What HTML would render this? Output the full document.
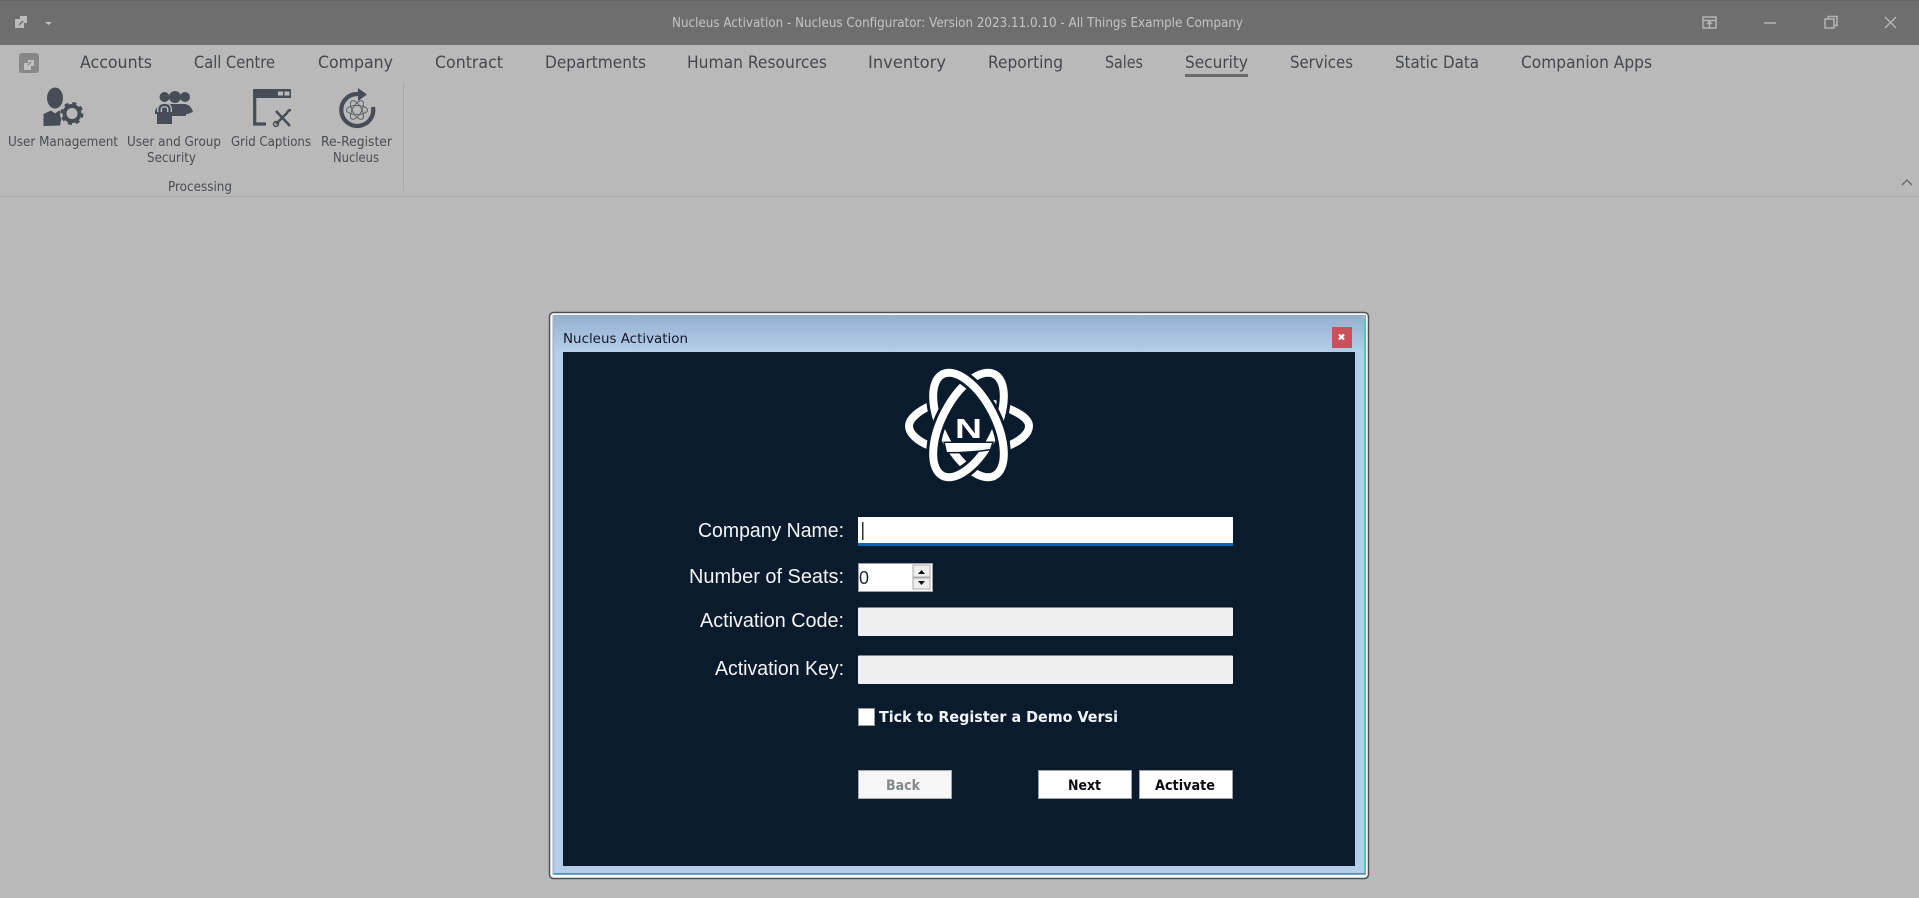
<!DOCTYPE html>
<html><head><meta charset="utf-8"><title>Nucleus Activation</title>
<style>
html,body{margin:0;padding:0;background:#b9b9b9;width:1919px;height:898px;overflow:hidden}
svg{display:block;filter:blur(.35px)}
.m{font:17px "DejaVu Sans","Liberation Sans",sans-serif;fill:#45494e}
.r{font:13px "DejaVu Sans","Liberation Sans",sans-serif;fill:#494d52}
.t{font:13px "DejaVu Sans","Liberation Sans",sans-serif;fill:#c4c4c4}
.l{font:20px "Liberation Sans",sans-serif;fill:#f4f4f4}
.b{font:bold 14px "DejaVu Sans","Liberation Sans",sans-serif;fill:#0a0c12}
</style></head><body>
<svg width="1919" height="898" viewBox="0 0 1919 898" xmlns="http://www.w3.org/2000/svg">
<defs>
<linearGradient id="g" x1="0" y1="0" x2="0" y2="1"><stop offset="0" stop-color="#96b1d0"/><stop offset="1" stop-color="#b4cde8"/></linearGradient>
<clipPath id="aover"><rect x="950" y="362" width="38" height="36"/><rect x="984" y="408" width="30" height="34"/></clipPath>
</defs>
<rect width="1919" height="898" fill="#b9b9b9"/>
<rect width="1919" height="45" fill="#6e6e6e"/>
<rect width="1919" height="1" fill="#666"/>
<rect y="196" width="1919" height="1" fill="#aaa"/>
<rect x="403" y="83" width="1" height="108" fill="#a8a8a8"/>
<path d="M1902 185l5-5 5 5" fill="none" stroke="#666" stroke-width="1.3"/>

<!-- title bar -->
<path d="M15 19h5v-3h7v7h-3v5h-9z" fill="#bcbcbc"/><path d="M19 25l4-4" stroke="#6e6e6e" stroke-width="1.5"/>
<path d="M45 22h7l-3.500 3z" fill="#c4c4c4"/>
<text class="t" x="672" y="27" textLength="571" lengthAdjust="spacingAndGlyphs">Nucleus Activation - Nucleus Configurator: Version 2023.11.0.10 - All Things Example Company</text>
<g fill="none" stroke="#b4b4b4" stroke-width="1.500">
<rect x="1703" y="17" width="13" height="11"/><path d="M1703 20.500h13M1709.500 28v-6M1707 24l2.500-2.500 2.500 2.500"/>
<path d="M1764 23h12"/>
<rect x="1825" y="19" width="9" height="9"/><path d="M1828 19v-2.500h9v9h-3"/>
<path d="M1885 17l11 11M1896 17l-11 11"/>
</g>

<!-- menu -->
<rect x="19" y="53" width="20" height="20" rx="3" fill="#878787"/>
<path d="M24 63h4v-3h6v6h-3v4h-7z" fill="#c0c0c0"/><path d="M28 65l3-3" stroke="#878787" stroke-width="1.500"/>
<g class="m">
<text x="80" y="68" textLength="72" lengthAdjust="spacingAndGlyphs">Accounts</text>
<text x="194" y="68" textLength="81" lengthAdjust="spacingAndGlyphs">Call Centre</text>
<text x="318" y="68" textLength="75" lengthAdjust="spacingAndGlyphs">Company</text>
<text x="435" y="68" textLength="68" lengthAdjust="spacingAndGlyphs">Contract</text>
<text x="545" y="68" textLength="101" lengthAdjust="spacingAndGlyphs">Departments</text>
<text x="687" y="68" textLength="140" lengthAdjust="spacingAndGlyphs">Human Resources</text>
<text x="868" y="68" textLength="78" lengthAdjust="spacingAndGlyphs">Inventory</text>
<text x="988" y="68" textLength="75" lengthAdjust="spacingAndGlyphs">Reporting</text>
<text x="1105" y="68" textLength="38" lengthAdjust="spacingAndGlyphs">Sales</text>
<text x="1185" y="68" textLength="63" lengthAdjust="spacingAndGlyphs">Security</text>
<text x="1290" y="68" textLength="63" lengthAdjust="spacingAndGlyphs">Services</text>
<text x="1395" y="68" textLength="84" lengthAdjust="spacingAndGlyphs">Static Data</text>
<text x="1521" y="68" textLength="131" lengthAdjust="spacingAndGlyphs">Companion Apps</text>
</g>
<rect x="1185" y="74" width="63" height="3" fill="#6b6b6b"/>

<!-- ribbon icons -->
<g fill="#464d57">
<ellipse cx="55" cy="98" rx="8" ry="10.500"/>
<path d="M43.500 126v-12l7.500-3.500 4 3 4-3 3 1v4l-2 10z"/>
</g>
<circle cx="72" cy="113.500" r="12" fill="#b9b9b9"/>
<circle cx="72" cy="113.500" r="7.500" fill="none" stroke="#464d57" stroke-width="4"/>
<circle cx="72" cy="113.500" r="10" fill="none" stroke="#464d57" stroke-width="3" stroke-dasharray="4 3.850"/>
<g fill="#464d57">
<circle cx="164.500" cy="97" r="5"/><circle cx="175" cy="97" r="6"/><circle cx="185" cy="97" r="5"/>
<path d="M155 111q3-7 9-7l5 1 6 0 5-1 5 0q6 1 8 8l-5 2-33 0z"/><path d="M170 104h16v12h-16z"/>
</g>
<path d="M159.500 113v-3.500q0-4.500 5-4.500t5 4.500v3.500" fill="none" stroke="#b9b9b9" stroke-width="5"/>
<path d="M159.500 113v-3.500q0-4.500 5-4.500t5 4.500v3.500" fill="none" stroke="#464d57" stroke-width="2.200"/>
<rect x="157" y="112" width="15" height="12" fill="#464d57"/>
<g>
<path d="M253 90q0-1 1-1h36q1 0 1 1v8h-38z" fill="#464d57"/>
<rect x="278" y="91.500" width="5" height="4" fill="#b9b9b9"/><rect x="284.500" y="91.500" width="5" height="4" fill="#b9b9b9"/>
<path d="M254.700 97v27h11.300" fill="none" stroke="#464d57" stroke-width="3.200"/>
<path d="M276 111l14 15M291 110q-3 0-4 3l-11 11" fill="none" stroke="#464d57" stroke-width="2.500"/>
<circle cx="276" cy="124" r="2.500" fill="none" stroke="#464d57" stroke-width="1.500"/>
</g>
<g fill="none" stroke="#464d57">
<path d="M358 94A16 16 0 1 0 373 107" stroke-width="4.200"/>
<path d="M358 88l9 6.500-9 6.500z" fill="#464d57" stroke="none"/>
<g stroke-width="1" opacity=".8"><ellipse cx="357" cy="110" rx="10.500" ry="4.500"/><ellipse cx="357" cy="110" rx="10.500" ry="4.500" transform="rotate(60 357 110)"/><ellipse cx="357" cy="110" rx="10.500" ry="4.500" transform="rotate(120 357 110)"/></g>
</g>
<g class="r">
<text x="8" y="146" textLength="110" lengthAdjust="spacingAndGlyphs">User Management</text>
<text x="127" y="146" textLength="94" lengthAdjust="spacingAndGlyphs">User and Group</text>
<text x="147" y="162" textLength="49" lengthAdjust="spacingAndGlyphs">Security</text>
<text x="231" y="146" textLength="80" lengthAdjust="spacingAndGlyphs">Grid Captions</text>
<text x="321" y="146" textLength="71" lengthAdjust="spacingAndGlyphs">Re-Register</text>
<text x="333" y="162" textLength="46" lengthAdjust="spacingAndGlyphs">Nucleus</text>
<text x="168" y="191" textLength="64" lengthAdjust="spacingAndGlyphs">Processing</text>
</g>

<!-- window -->
<rect x="549.500" y="312.500" width="819" height="566" rx="4" fill="#fff" stroke="#4b5158" stroke-width="1.500"/>
<rect x="553" y="315.500" width="812.500" height="559" fill="#b4cde8" stroke="#8a929c" stroke-width=".8"/>
<rect x="554" y="316" width="810" height="36" fill="url(#g)"/>
<rect x="554" y="873" width="811" height="1.200" fill="#1fa6c8"/>
<rect x="1364" y="318" width="1" height="555" fill="#5fc0d8"/>
<rect x="563" y="352" width="792" height="514" fill="#0a1b2d"/>
<text x="563" y="343" font-family="DejaVu Sans,Liberation Sans,sans-serif" font-size="13.500" fill="#14182a" textLength="125" lengthAdjust="spacingAndGlyphs">Nucleus Activation</text>
<rect x="1332" y="327" width="20" height="21" fill="#c9525a"/>
<path d="M1339 334.500l5 5M1344 334.500l-5 5" stroke="#fff" stroke-width="2.200"/>

<!-- logo -->
<g fill="none">
<path d="M932 405C918 411 909 419 909 426C909 433 917 441 930 446" stroke="#fff" stroke-width="8"/>
<path d="M990 403C1012 408 1029 417 1029 426C1029 434 1020 441 1008 446" stroke="#fff" stroke-width="8"/>
<ellipse cx="968.500" cy="425" rx="27" ry="57" transform="rotate(-27 968.500 425)" stroke="#0a1b2d" stroke-width="14"/>
<ellipse cx="968.500" cy="425" rx="27" ry="57" transform="rotate(-27 968.500 425)" stroke="#fff" stroke-width="8"/>
<ellipse cx="968.500" cy="425" rx="27" ry="57" transform="rotate(27 968.500 425)" stroke="#0a1b2d" stroke-width="14"/>
<ellipse cx="968.500" cy="425" rx="27" ry="57" transform="rotate(27 968.500 425)" stroke="#fff" stroke-width="8"/>
<g clip-path="url(#aover)">
<ellipse cx="968.500" cy="425" rx="27" ry="57" transform="rotate(-27 968.500 425)" stroke="#0a1b2d" stroke-width="14"/>
<ellipse cx="968.500" cy="425" rx="27" ry="57" transform="rotate(-27 968.500 425)" stroke="#fff" stroke-width="8"/>
</g>
</g>
<text x="955" y="438" font-family="Liberation Sans,sans-serif" font-size="28" font-weight="bold" fill="#fff" textLength="27" lengthAdjust="spacingAndGlyphs">N</text>
<path d="M945 443h47l-2 6q-20 3-43 3z" fill="#fff" stroke="#0a1b2d" stroke-width="3" paint-order="stroke"/>

<!-- form -->
<g class="l">
<text x="698" y="537" textLength="146" lengthAdjust="spacingAndGlyphs">Company Name:</text>
<text x="689" y="583" textLength="155" lengthAdjust="spacingAndGlyphs">Number of Seats:</text>
<text x="700" y="627" textLength="144" lengthAdjust="spacingAndGlyphs">Activation Code:</text>
<text x="715" y="675" textLength="129" lengthAdjust="spacingAndGlyphs">Activation Key:</text>
</g>
<rect x="858" y="517" width="375" height="28" fill="#fff"/>
<rect x="858" y="543" width="375" height="3" fill="#0b66b6"/>
<rect x="862" y="522" width="1.500" height="18" fill="#333"/>
<rect x="858.500" y="563.500" width="74" height="28" fill="#fff" stroke="#a0a0a0"/>
<text x="859" y="584" font-family="Liberation Sans,sans-serif" font-size="18" fill="#1c2a3a">0</text>
<rect x="913" y="565" width="17" height="12" fill="#eee" stroke="#aaa"/>
<rect x="913" y="578" width="17" height="11" fill="#eee" stroke="#aaa"/>
<path d="M918 574l3.500-4 3.500 4z" fill="#111"/><path d="M918 581l3.500 4 3.500-4z" fill="#111"/>
<rect x="858" y="607.500" width="375" height="28.500" rx="1" fill="#efefef"/>
<rect x="858" y="655.500" width="375" height="28.500" rx="1" fill="#efefef"/>
<rect x="858.500" y="708.500" width="16" height="17" fill="#fff" stroke="#999"/>
<text x="879" y="722" font-family="DejaVu Sans,Liberation Sans,sans-serif" font-size="15" font-weight="bold" fill="#f2f6fb" textLength="239" lengthAdjust="spacingAndGlyphs">Tick to Register a Demo Versi</text>
<rect x="858.500" y="770.500" width="93" height="28" fill="#f6f6f6" stroke="#a8a8a8"/>
<rect x="1038.500" y="770.500" width="93" height="28" fill="#fff" stroke="#a0a0a0"/>
<rect x="1139.500" y="770.500" width="93" height="28" fill="#fff" stroke="#a0a0a0"/>
<text class="b" x="886" y="790" textLength="34" lengthAdjust="spacingAndGlyphs" style="fill:#85888c">Back</text>
<text class="b" x="1068" y="790" textLength="33" lengthAdjust="spacingAndGlyphs">Next</text>
<text class="b" x="1155" y="790" textLength="60" lengthAdjust="spacingAndGlyphs">Activate</text>
</svg>
</body></html>
